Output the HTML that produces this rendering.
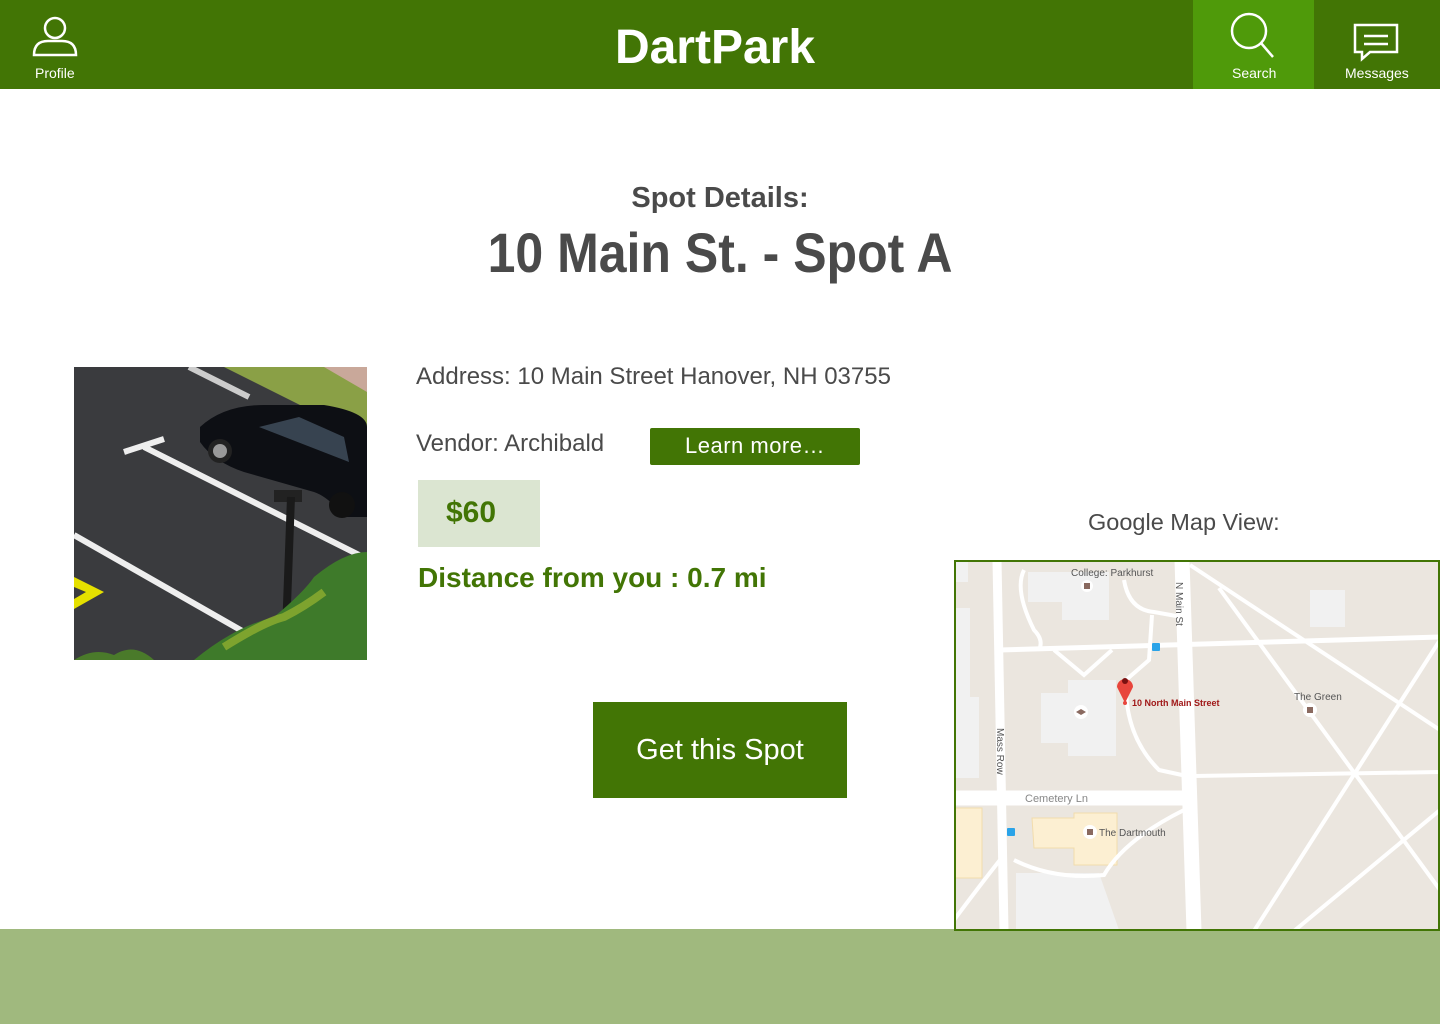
<!DOCTYPE html>
<html><head><meta charset="utf-8"><style>
*{margin:0;padding:0;box-sizing:border-box}
body{width:1440px;height:1024px;position:relative;background:#fff;font-family:"Liberation Sans",sans-serif;overflow:hidden;color:#4a4a4a}
.a{position:absolute;white-space:nowrap}
</style></head><body>
<div class="a" style="left:0;top:0;width:1440px;height:89px;background:#427505"></div>
<div class="a" style="left:1193px;top:0;width:121px;height:89px;background:#4f9a0a"></div>
<svg class="a" style="left:0;top:0" width="1440" height="89">
<g fill="none" stroke="#fff" stroke-width="2.5">
<circle cx="55" cy="28" r="10"/>
<path d="M34 55 Q34 41 48 41 L62 41 Q76 41 76 55 Z"/>
<circle cx="1249" cy="31" r="17"/>
<path d="M1261 43 L1273 57"/>
<path d="M1355 25 H1397 V52 H1370 L1362 59 V52 H1355 Z"/>
<path d="M1364 36 H1388 M1364 44 H1388"/>
</g></svg>
<div class="a" style="left:35px;top:65px;font-size:14px;color:#fff">Profile</div>
<div class="a" style="left:1232px;top:65px;font-size:14px;color:#fff">Search</div>
<div class="a" style="left:1345px;top:65px;font-size:14px;color:#fff">Messages</div>
<div class="a" style="left:0;width:1430px;text-align:center;top:20px;font-size:48px;font-weight:bold;color:#fff">DartPark</div>

<div class="a" style="left:0;width:1440px;text-align:center;top:182px;font-size:29px;font-weight:bold">Spot Details:</div>
<div class="a" style="left:0;width:1440px;text-align:center;top:224px;font-size:50px;font-weight:bold;transform:scaleY(1.12)">10 Main St. - Spot A</div>

<svg class="a" style="left:74px;top:367px" width="293" height="293" viewBox="0 0 293 293">
<rect width="293" height="293" fill="#3a3b3e"/>
<polygon points="150,0 293,0 293,75 230,40" fill="#8aa046"/>
<polygon points="250,0 293,0 293,25" fill="#c9a89a"/>
<path d="M115 0 L175 30" stroke="#ccc" stroke-width="6"/>
<path d="M126 60 Q150 38 190 38 L250 38 Q293 45 293 60 L293 150 L270 150 Q255 130 240 125 L170 105 Q140 95 126 75 Z" fill="#0d0f14"/>
<path d="M185 60 L225 50 L270 70 L275 95 Z" fill="#4a5a6a" opacity=".7"/>
<circle cx="146" cy="84" r="12" fill="#222"/><circle cx="146" cy="84" r="7" fill="#999"/>
<circle cx="268" cy="138" r="13" fill="#111"/>
<path d="M50 85 L90 72 M70 80 L293 192" stroke="#eee" stroke-width="6"/>
<path d="M0 168 L170 265" stroke="#eee" stroke-width="6"/>
<rect x="200" y="123" width="28" height="12" fill="#222"/>
<path d="M217 130 L212 265" stroke="#1a1a1a" stroke-width="8"/>
<polygon points="0,210 30,225 0,242 0,232 12,225 0,220" fill="#e5e000"/>
<path d="M120 293 Q160 260 200 250 Q230 225 240 210 Q270 185 293 185 L293 293 Z" fill="#3e7a2a"/>
<path d="M150 280 Q190 255 210 250 Q230 240 250 225" stroke="#9ab530" stroke-width="8" fill="none" opacity=".7"/>
<path d="M0 293 Q20 280 40 288 Q60 275 80 293 Z" fill="#4a7a2a"/>
</svg>

<div class="a" style="left:416px;top:363px;font-size:24px">Address: 10 Main Street Hanover, NH 03755</div>
<div class="a" style="left:416px;top:430px;font-size:24px">Vendor: Archibald</div>
<div class="a" style="left:650px;top:428px;width:210px;height:37px;background:#427505;border-radius:2px;color:#fff;font-size:22px;text-align:center;line-height:36px;letter-spacing:.5px">Learn more…</div>
<div class="a" style="left:418px;top:480px;width:122px;height:67px;background:#dbe5d1"></div>
<div class="a" style="left:446px;top:496px;font-size:30px;font-weight:bold;color:#427505">$60</div>
<div class="a" style="left:418px;top:562px;font-size:28px;font-weight:bold;color:#427505">Distance from you : 0.7 mi</div>
<div class="a" style="left:593px;top:702px;width:254px;height:96px;background:#427505;color:#fff;font-size:29px;text-align:center;line-height:96px">Get this Spot</div>

<div class="a" style="left:1088px;top:509px;font-size:23.5px">Google Map View:</div>
<div class="a" style="left:0;top:929px;width:1440px;height:95px;background:#a0b97e"></div>
<svg class="a" style="left:954px;top:560px" width="486" height="371" viewBox="0 0 486 371">
<rect width="486" height="371" fill="#ebe6df"/>
<g fill="#f1f1f1">
<path d="M74 12 L155 12 L155 60 L108 60 L108 42 L74 42 Z"/>
<path d="M0 48 L16 48 L16 137 L25 137 L25 218 L0 218 Z"/>
<path d="M0 0 L14 0 L14 22 L0 22 Z"/>
<path d="M87 133 L114 133 L114 120 L162 120 L162 196 L114 196 L114 183 L87 183 Z"/>
<rect x="356" y="30" width="35" height="37"/>
<path d="M62 313 L145 313 L165 370 L62 370 Z"/>
</g>
<g fill="#fcefd2" stroke="#f2dcac">
<path d="M78 258 L120 258 L120 253 L163 253 L163 305 L120 305 L120 288 L80 288 Z"/>
<rect x="0" y="248" width="28" height="70"/>
</g>
<g stroke="#fff" fill="none">
<path d="M43 0 L50 371" stroke-width="9"/>
<path d="M228 0 L240 371" stroke-width="15"/>
<path d="M0 238 L230 238" stroke-width="15"/>
<path d="M45 90 L486 77" stroke-width="5"/>
<path d="M240 216 L486 212" stroke-width="4"/>
<path d="M236 5 L486 170" stroke-width="4"/>
<path d="M265 28 L486 330" stroke-width="4"/>
<path d="M300 371 L486 80" stroke-width="4"/>
<path d="M340 371 L486 250" stroke-width="4"/>
<path d="M100 90 L130 115 L158 90" stroke-width="4"/>
<path d="M198 55 L195 100 L172 120 Q170 175 205 210 L228 215" stroke-width="4"/>
<path d="M170 20 Q175 50 200 52 L228 57" stroke-width="4"/>
<path d="M70 10 Q60 30 80 70 Q90 80 85 90" stroke-width="4"/>
<path d="M60 300 Q100 320 150 315 Q170 280 230 250" stroke-width="4"/>
<path d="M0 360 Q30 320 46 300" stroke-width="4"/>
</g>
<circle cx="133" cy="26" r="6" fill="#fff"/><rect x="130" y="23" width="6" height="6" fill="#8a6a60"/>
<circle cx="127" cy="152" r="7" fill="#fff"/><path d="M122 152 L127 149 L132 152 L127 155 Z" fill="#8a6a60"/>
<circle cx="356" cy="150" r="7" fill="#fff"/><rect x="353" y="147" width="6" height="6" fill="#8a6a60"/>
<circle cx="136" cy="272" r="7" fill="#fff"/><rect x="133" y="269" width="6" height="6" fill="#8a6a60"/>
<rect x="198" y="83" width="8" height="8" rx="1" fill="#2aa3e8"/>
<rect x="53" y="268" width="8" height="8" rx="1" fill="#2aa3e8"/>
<path d="M171 143 L163 127 A8 8 0 1 1 179 127 Z" fill="#e8453c"/>
<circle cx="171" cy="121" r="3" fill="#7a1010"/>
<circle cx="171" cy="143" r="2" fill="#e8453c"/>
<g font-family="Liberation Sans,sans-serif" font-size="10" fill="#555">
<text x="117" y="16">College: Parkhurst</text>
<text x="340" y="140">The Green</text>
<text x="145" y="276">The Dartmouth</text>
<text x="71" y="242" fill="#888" font-size="11">Cemetery Ln</text>
<text x="178" y="146" fill="#a01818" font-weight="bold" font-size="9">10 North Main Street</text>
<text transform="translate(222,22) rotate(90)" font-size="10">N Main St</text>
<text transform="translate(43,168) rotate(90)" font-size="10">Mass Row</text>
</g>
<rect x="1" y="1" width="484" height="369" fill="none" stroke="#427505" stroke-width="2"/>
</svg>
</body></html>
